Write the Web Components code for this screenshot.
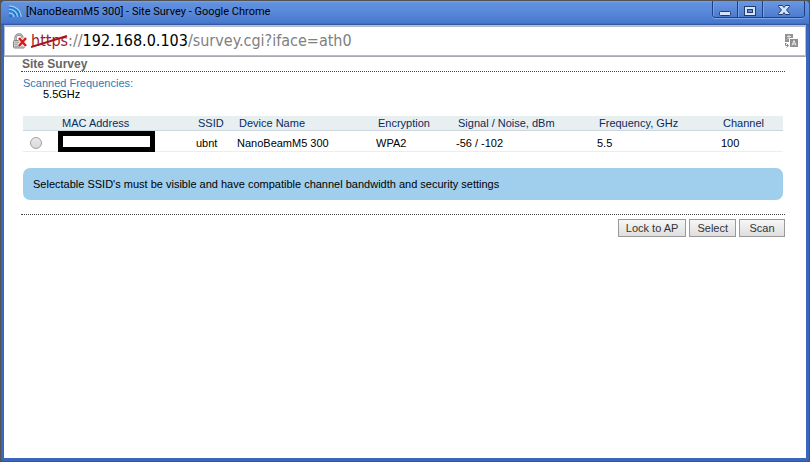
<!DOCTYPE html>
<html lang="en">
<head>
<meta charset="utf-8">
<title>[NanoBeamM5 300] - Site Survey - Google Chrome</title>
<style>
html,body{height:100%;margin:0;background:#535353;overflow:hidden}
body{font-family:"Liberation Sans",Arial,sans-serif}
</style>
</head>
<body>
<browser-window>
  <title-bar slot="title">[NanoBeamM5 300] - Site Survey - Google Chrome</title-bar>
  <address-bar slot="address"></address-bar>
  <site-survey>
    <survey-table></survey-table>
    <info-note>Selectable SSID's must be visible and have compatible channel bandwidth and security settings</info-note>
    <action-bar slot="actions"></action-bar>
  </site-survey>
</browser-window>
<script>
function define(name, html) {
  const t = document.createElement('template');
  t.innerHTML = html;
  customElements.define(name, class extends HTMLElement {
    constructor() {
      super();
      this.attachShadow({mode: 'open'}).append(t.content.cloneNode(true));
    }
  });
}

define('browser-window', `
<style>
:host{display:flex;flex-direction:column;box-sizing:border-box;height:100vh;padding:1px;background:#535353}
.frame{flex:1;display:flex;flex-direction:column;min-height:0;box-sizing:border-box;border:solid #3a67bd;border-width:0 3px 3px;border-radius:4px 4px 3px 3px;background:#3a67bd}
.page{flex:1;min-height:0;background:#fff;border-top:1px solid #a8a8b0;overflow:hidden}
</style>
<div class="frame"><slot name="title"></slot><slot name="address"></slot><main class="page"><slot></slot></main></div>`);

define('title-bar', `
<style>
:host{display:flex;align-items:flex-start;height:24px;margin:0 -3px;padding:0 4px 0 7px;box-sizing:border-box;border-radius:4px 4px 0 0;background:linear-gradient(#7ba4ec 0,#6090de 2px,#5a8ada 10px,#4878cc 22px,#2c4f99 24px);font:11px/18px Roboto,sans-serif;color:#000}
.logo{flex:none;margin:4px 4px 0 0}
.name{flex:1;min-width:0;white-space:nowrap;overflow:hidden;padding-top:2px}
.controls{display:flex;flex:none;box-sizing:border-box;height:17px;border:1px solid #1d4082;border-top:0;border-radius:0 0 4px 4px;overflow:hidden;box-shadow:0 1px #83a8ea}
button{display:grid;place-items:center;width:25px;padding:0;border:0;border-left:1px solid #1d4082;box-shadow:inset 1px 0 #7ba1e5;background:linear-gradient(#6b98e3,#4c7bcf)}
button:first-child{border-left:0;width:24px}
button:last-child{width:42px}
svg{display:block}
</style>
<svg class="logo" width="14" height="13" viewBox="0 0 14 13" fill="none"><g stroke="#9bd2f5" stroke-width="1.200"><path d="M1 1.200A11 11 0 0 1 13 12"/><path d="M1 4.700A7.500 7.500 0 0 1 9.500 12"/><path d="M1 8.200A4.500 4.500 0 0 1 6 12"/></g><g stroke="#0f7dc9" stroke-width="1.300"><path d="M1 2.500A10 10 0 0 1 11.700 12"/><path d="M1 6A6.500 6.500 0 0 1 8.200 12"/></g><circle cx="2.500" cy="11" r="1.400" fill="#0f7dc9"/></svg>
<span class="name"><slot></slot></span>
<div class="controls">
<button aria-label="Minimize"><svg width="12" height="14"><rect x=".5" y="9.500" width="11" height="4" rx="1" fill="#d5e4fd" stroke="#243c6d"/></svg></button>
<button aria-label="Maximize"><svg width="12" height="14"><rect x=".5" y="4.500" width="11" height="9" fill="#d5e4fd" stroke="#243c6d"/><rect x="3.500" y="7.500" width="5" height="3" fill="#628dd7" stroke="#243c6d"/></svg></button>
<button aria-label="Close"><svg width="12" height="14"><path d="M.500 3.500h4L6 5.500l1.500-2h4v1L8.500 8l3 3.500v1h-4L6 10.500l-1.500 2h-4v-1L3.500 8 .500 4.500z" fill="#d5e4fd" stroke="#243c6d"/></svg></button>
</div>`);

define('address-bar', `
<style>
:host{display:flex;align-items:center;height:31px;box-sizing:border-box;border:solid #b4bdd0;border-width:2px 1px 1px;background:#fff;padding:0 7px 0 7px;font:16px/26px "DejaVu Sans Condensed","DejaVu Sans",sans-serif;color:#808080}
.lock{flex:none;margin-right:3px}
.url{flex:1;white-space:nowrap}
.scheme{position:relative;color:#a11a21}
.scheme svg{position:absolute;left:0;top:2px;width:100%;height:16px}
b{font-weight:400;color:#000}
button{padding:0;border:0;background:none}
svg{display:block}
</style>
<svg class="lock" width="16" height="17" viewBox="0 0 16 17"><path d="M3.500 8V5a3.500 3.500 0 0 1 7 0v3" fill="none" stroke="#888" stroke-width="2.400"/><path d="M3.500 8V5a3.500 3.500 0 0 1 7 0v3" fill="none" stroke="#ccc" stroke-width=".8"/><rect x="1.500" y="7.500" width="11" height="7.500" rx="1" fill="#c9c9c9" stroke="#858585"/><path d="M3 9.500h7M3 11.500h7M3 13.500h7" stroke="#aaa"/><path d="M7 5l7 8M14 5l-7 8" stroke="#fff" stroke-width="4"/><path d="M7 5l7 8M14 5l-7 8" stroke="#d51d1d" stroke-width="2.500"/></svg>
<div class="url" role="textbox" aria-label="Address"><span class="scheme">https<svg viewBox="0 0 36 16" preserveAspectRatio="none"><path d="M0 14L35 3" stroke="#a8141b" stroke-width="2"/></svg></span>://<b>192.168.0.103</b>/survey.cgi?iface=ath0</div>
<button aria-label="Translate this page"><svg width="14" height="14" viewBox="0 0 14 14"><path d="M1 0h8v5H5v3H1z" fill="#929292"/><path d="M3 2.500h4M5 1v2M3 5.500l3-3" stroke="#e4e4e4" fill="none"/><path d="M5.500 4.500h8v8h-8z" fill="#8a8a8a" stroke="#fff"/><path d="M6 5h8v8H6z" fill="#8f8f8f"/><path d="M8 11.500L10 6.500l2 5M8.700 10h2.600" fill="none" stroke="#eee"/><path d="M1.500 9v2.500H4M2.500 9.500L4.500 11.500 2.500 13.500" fill="none" stroke="#888"/></svg></button>`);

define('site-survey', `
<style>
:host{display:block;padding:0 21px 0 17px;font-size:11px;line-height:12px;color:#000}
h1{margin:0;padding-left:1px;font-size:12px;line-height:14px;color:#666;border-bottom:1px dotted #444}
.body{padding:5px 2px 14px}
dl{margin:0 0 16px}
dt{color:#2a7ab8}
dd{margin:-1px 0 0 20px}
footer{border-top:1px dotted #444;padding-top:4px}
</style>
<h1>Site Survey</h1>
<div class="body"><dl><dt>Scanned Frequencies:</dt><dd>5.5GHz</dd></dl><slot></slot></div>
<footer><slot name="actions"></slot></footer>`);

define('survey-table', `
<style>
:host{display:block}
table{width:100%;table-layout:fixed;border-collapse:separate;border-spacing:0;font-size:11px;line-height:14px}
th,td{text-align:left;white-space:nowrap;box-sizing:border-box}
th{height:15px;padding:0 0 0 4px;font-weight:400;color:#0c2a5c;background:#e7eff0;border-bottom:1px solid #ccd5de}
td{height:21px;padding:5px 0 1px 2px;border-bottom:1px solid #e7eff0}
td.pick{padding:0 0 0 7px}
td.mac{padding:0;vertical-align:top}
.mask{display:block;box-sizing:border-box;width:97px;height:21px;margin-bottom:-1px;border:5px solid #000;background:#fff}
input{appearance:none;display:block;box-sizing:border-box;width:12px;height:12px;margin:4px 0 0;border:1px solid #a2a2a2;border-radius:50%;background:linear-gradient(#e9e9e9,#d9d9d9)}
</style>
<table>
<colgroup><col style="width:35px"><col style="width:136px"><col style="width:41px"><col style="width:139px"><col style="width:80px"><col style="width:141px"><col style="width:124px"><col style="width:64px"></colgroup>
<thead><tr><th></th><th scope="col">MAC Address</th><th scope="col">SSID</th><th scope="col">Device Name</th><th scope="col">Encryption</th><th scope="col">Signal / Noise, dBm</th><th scope="col">Frequency, GHz</th><th scope="col">Channel</th></tr></thead>
<tbody><tr><td class="pick"><input type="radio" name="ap" aria-label="ubnt"></td><td class="mac"><span class="mask"></span></td><td>ubnt</td><td>NanoBeamM5 300</td><td>WPA2</td><td>-56 / -102</td><td>5.5</td><td>100</td></tr></tbody>
</table>`);

define('info-note', `
<style>
:host{display:block;margin-top:16px;padding:10px;border-radius:7px;background:#a0ceed;line-height:12px}
</style><slot></slot>`);

define('action-bar', `
<style>
:host{display:flex;justify-content:flex-end;gap:3px}
button{box-sizing:border-box;height:18px;min-width:46px;padding:0 7px;border:1px solid #999;font:11px/14px "Liberation Sans",Arial,sans-serif;color:#333;background:linear-gradient(#f6f6f6,#dedede)}
</style>
<button>Lock to AP</button><button>Select</button><button>Scan</button>`);
</script>
</body>
</html>
